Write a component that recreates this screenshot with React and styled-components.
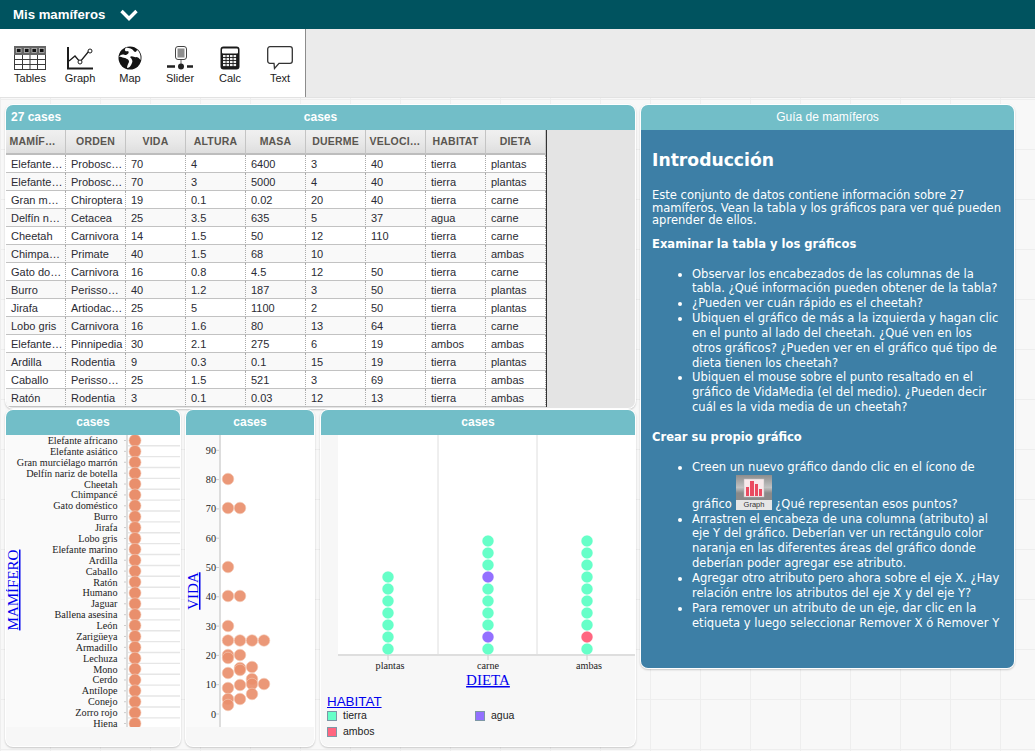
import styled, { createGlobalStyle } from "styled-components";

const GlobalStyle = createGlobalStyle`
  html, body {
    margin: 0;
    padding: 0;
    height: 100%;
    overflow: hidden;
    font-family: "Liberation Sans", Arial, sans-serif;
  }
`;

const columns = ["MAMÍFERO", "ORDEN", "VIDA", "ALTURA", "MASA", "DUERME", "VELOCIDAD", "HABITAT", "DIETA"];

const rows = [
  ["Elefante africano", "Proboscidea", "70", "4", "6400", "3", "40", "tierra", "plantas"],
  ["Elefante asiático", "Proboscidea", "70", "3", "5000", "4", "40", "tierra", "plantas"],
  ["Gran murciélago marrón", "Chiroptera", "19", "0.1", "0.02", "20", "40", "tierra", "carne"],
  ["Delfín nariz de botella", "Cetacea", "25", "3.5", "635", "5", "37", "agua", "carne"],
  ["Cheetah", "Carnivora", "14", "1.5", "50", "12", "110", "tierra", "carne"],
  ["Chimpancé", "Primate", "40", "1.5", "68", "10", "", "tierra", "ambas"],
  ["Gato doméstico", "Carnivora", "16", "0.8", "4.5", "12", "50", "tierra", "carne"],
  ["Burro", "Perissodactyla", "40", "1.2", "187", "3", "50", "tierra", "plantas"],
  ["Jirafa", "Artiodactyla", "25", "5", "1100", "2", "50", "tierra", "plantas"],
  ["Lobo gris", "Carnivora", "16", "1.6", "80", "13", "64", "tierra", "carne"],
  ["Elefante marino", "Pinnipedia", "30", "2.1", "275", "6", "19", "ambos", "ambas"],
  ["Ardilla", "Rodentia", "9", "0.3", "0.1", "15", "19", "tierra", "plantas"],
  ["Caballo", "Perissodactyla", "25", "1.5", "521", "3", "69", "tierra", "ambas"],
  ["Ratón", "Rodentia", "3", "0.1", "0.03", "12", "13", "tierra", "ambas"],
];

const mammals = [
  "Elefante africano", "Elefante asiático", "Gran murciélago marrón", "Delfín nariz de botella",
  "Cheetah", "Chimpancé", "Gato doméstico", "Burro", "Jirafa", "Lobo gris", "Elefante marino",
  "Ardilla", "Caballo", "Ratón", "Humano", "Jaguar", "Ballena asesina", "León", "Zarigüeya",
  "Armadillo", "Lechuza", "Mono", "Cerdo", "Antílope", "Conejo", "Zorro rojo", "Hiena",
];

// x, y inside the VIDA plot
const vidaDots = [
  [42, 44], [42, 73], [54, 73], [42, 132], [42, 161], [54, 161], [42, 191],
  [42, 205.5], [54, 205.5], [66, 205.5], [78, 205.5], [42, 220], [54, 220], [42, 223],
  [54, 233], [54, 235], [66, 232], [42, 238], [66, 244], [66, 249], [78, 249], [54, 250],
  [42, 253], [66, 259], [42, 264], [54, 264], [42, 270],
];

const TIERRA = "#66ffc8";
const AGUA = "#9370ff";
const AMBOS = "#ff6680";

const dietColumns = [
  { x: 50, dots: Array(7).fill(TIERRA) },
  { x: 150, dots: [TIERRA, AGUA, TIERRA, TIERRA, TIERRA, TIERRA, AGUA, TIERRA, TIERRA, TIERRA] },
  { x: 249, dots: [TIERRA, AMBOS, ...Array(8).fill(TIERRA)] },
];

const Page = styled.div`
  width: 1035px;
  height: 751px;
  display: flex;
  flex-direction: column;
  overflow: hidden;
`;

const TitleBar = styled.header`
  height: 29px;
  background: #00535f;
  display: flex;
  align-items: center;
  padding-left: 13px;
  gap: 15px;
  flex: none;
`;

const DocTitle = styled.span`
  color: #fff;
  font-size: 13.2px;
  font-weight: 700;
`;

const ToolShelf = styled.div`
  height: 69px;
  box-sizing: border-box;
  flex: none;
  background: #ebebeb;
  border-bottom: 1px solid #e2e2e2;
  display: flex;
`;

const Tools = styled.nav`
  width: 300px;
  padding-left: 5px;
  background: #fff;
  border-right: 1px solid #8c8c8c;
  display: flex;
`;

const Tool = styled.button`
  width: 50px;
  border: 0;
  padding: 17px 0 0;
  background: none;
  display: flex;
  flex-direction: column;
  align-items: center;
  gap: 2px;
  font: 11px "Liberation Sans", Arial, sans-serif;
  color: #222;
  svg {
    display: block;
  }
`;

const Canvas = styled.main`
  position: relative;
  flex: 1;
  background-color: #f8f8f8;
  background-image: linear-gradient(#eeeeee 1px, transparent 1px),
    linear-gradient(90deg, #eeeeee 1px, transparent 1px);
  background-size: 50px 50px;
  background-position: 0 1px;
`;

const Panel = styled.section`
  position: absolute;
  left: ${(p) => p.$x}px;
  top: ${(p) => p.$y - 98}px;
  width: ${(p) => p.$w}px;
  height: ${(p) => p.$h}px;
  border-radius: 7px;
  background: #f7f7f7;
  box-shadow: 0 0 0 1px #fff, 0 1px 2px 1px rgba(0, 0, 0, 0.2);
  overflow: hidden;
  display: flex;
  flex-direction: column;
`;

const PanelHead = styled.div`
  height: 25px;
  box-sizing: border-box;
  padding-bottom: 2px;
  flex: none;
  background: #72bec8;
  color: #fff;
  font-size: 12px;
  font-weight: ${(p) => (p.$light ? 400 : 700)};
  display: flex;
  align-items: center;
  justify-content: center;
  position: relative;
`;

const CaseCount = styled.span`
  position: absolute;
  left: 5px;
`;

const TableArea = styled.div`
  flex: 1;
  background: #e4e4e4;
  overflow: hidden;
`;

const TableGrid = styled.div`
  width: 540px;
  border-right: 1px solid #333;
  display: grid;
  grid-template-columns: repeat(9, 60px);
`;

const HeadCell = styled.div`
  height: 25px;
  box-sizing: border-box;
  padding: 0 3.5px 2px;
  background: linear-gradient(#f0f0f0, #e8e8e8 55%, #dedede);
  border-right: 1px solid #c4c4c4;
  border-bottom: 2px solid #bdbdbd;
  color: #5a5650;
  font-size: 10.5px;
  font-weight: 700;
  letter-spacing: 0.2px;
  line-height: 23px;
  text-align: center;
  white-space: nowrap;
  overflow: hidden;
  text-overflow: ellipsis;
`;

const Cell = styled.div`
  height: 18px;
  box-sizing: border-box;
  padding: 0 1px 0 5px;
  background: ${(p) => (p.$odd ? "#f9f9f9" : "#fff")};
  border-right: 1px dotted #aaa;
  border-bottom: 1px solid #c2c2c2;
  color: #2b2b33;
  font-size: 11px;
  line-height: 18px;
  white-space: nowrap;
  overflow: hidden;
  text-overflow: ellipsis;
`;

const PlotSvg = styled.svg`
  display: block;
  flex: none;
`;

const AxisLabel = styled.text`
  fill: #0000ee;
  font-family: "Liberation Serif", "Times New Roman", serif;
  font-size: 15px;
  text-decoration: underline;
`;

const TickText = styled.text`
  fill: #222;
  font-family: "Liberation Serif", "Times New Roman", serif;
  font-size: 10.2px;
`;

const Legend = styled.div`
  padding: 3px 6px 0;
`;

const LegendTitle = styled.a`
  color: #0000ee;
  font-size: 13.4px;
  text-decoration: underline;
  display: block;
  line-height: 15px;
`;

const LegendGrid = styled.div`
  display: grid;
  grid-template-columns: 148px 1fr;
  row-gap: 5px;
  margin-top: 1px;
`;

const LegendItem = styled.div`
  display: flex;
  align-items: center;
  gap: 5px;
  height: 11px;
  font-size: 10.5px;
  color: #222;
  line-height: 11px;
`;

const Swatch = styled.span`
  width: 8px;
  height: 8px;
  border: 1.5px solid #7d97a6;
  background: ${(p) => p.$color};
  margin-right: 1px;
`;

const Guide = styled.article`
  flex: 1;
  background: #3d7fa6;
  color: #fff;
  padding: 0 11px;
  font-family: "DejaVu Sans", Verdana, sans-serif;
  font-size: 11.55px;
  line-height: 14.85px;
  h2 {
    font-size: 17.2px;
    line-height: 24px;
    margin: 18px 0 17px;
  }
  p {
    margin: 0;
    line-height: 12.5px;
  }
  h3 {
    font-size: 11.55px;
    line-height: 15px;
    margin: 10px 0 15px;
  }
  ul {
    margin: 0 0 15px;
    padding: 0 0 0 40px;
  }
`;

const GraphChip = styled.span`
  display: inline-flex;
  vertical-align: -2px;
`;

const TablesIcon = () => (
  <svg width="32" height="24" viewBox="0 0 32 24">
    <rect x="0.5" y="0.5" width="31" height="23" fill="#fff" stroke="#3b3b3b" />
    <rect x="0" y="0" width="32" height="9" fill="#666" />
    {[2.5, 10.5, 18, 25.5].map((x) => (
      <rect key={x} x={x} y="2.5" width="4.5" height="4" fill="#111" stroke="#ccc" strokeWidth="0.7" />
    ))}
    <path d="M0 13.5H32M0 18.5H32M8.5 9V24M16 9V24M23.5 9V24" stroke="#3b3b3b" strokeWidth="1" />
  </svg>
);

const GraphIcon = () => (
  <svg width="28" height="24" viewBox="0 0 28 24" fill="none" stroke="#1c1c1c">
    <path d="M2 1V22.5H27" strokeWidth="2" />
    <path d="M3 15L9 10L14 16L23 5" strokeWidth="1.3" />
    <circle cx="14" cy="16" r="2" fill="#fff" strokeWidth="1" />
    <circle cx="24" cy="5" r="2" fill="#fff" strokeWidth="1" />
  </svg>
);

const MapIcon = () => (
  <svg width="24" height="24" viewBox="0 0 24 24">
    <circle cx="12" cy="12" r="11.5" fill="#141414" />
    <path
      d="M8 1.5C5 5 9 6 10 5C12 7 9 9 7 9C4 8 2 9 1 11C3 10 5 12 7 12C9 13 11 13 11 16C10 18 9 20 9 22C12 22 13 19 14 17C15 15 14 13 12 11C14 9 17 12 18 11C20 11 21 12 22.5 14C23 10 22 6 19 4C18 7 16 6 15 4C14 3 12 2 8 1.5Z"
      fill="#fff"
    />
    <path d="M12 1C14 3 17 5 19 4C16 2 14 1 12 1ZM4 14C6 17 7 19 6 21C3 19 2 16 2 13Z" fill="#141414" />
  </svg>
);

const SliderIcon = () => (
  <svg width="26" height="24" viewBox="0 0 26 24">
    <rect x="8.5" y="0.5" width="11" height="13" rx="2.5" fill="#fff" stroke="#444" />
    <rect x="10.5" y="2.5" width="7" height="9" fill="#8e8e8e" />
    <path d="M14 14V18" stroke="#666" />
    <path d="M0 20.5H8M20 20.5H26" stroke="#222" strokeWidth="2.4" />
    <circle cx="14" cy="20.5" r="3" fill="#222" />
  </svg>
);

const CalcIcon = () => (
  <svg width="20" height="24" viewBox="0 0 20 24">
    <rect x="0.5" y="0.5" width="19" height="23" rx="3" fill="#1a1a1a" />
    <rect x="2" y="2.5" width="16" height="5" rx="1" fill="#fff" />
    {[9, 12, 15, 18].map((y) =>
      [3, 6.5, 10, 13.5].map((x) => <rect key={`${x}-${y}`} x={x} y={y} width="2.6" height="2.1" fill="#eee" />)
    )}
  </svg>
);

const TextIcon = () => (
  <svg width="26" height="24" viewBox="0 0 26 24">
    <path
      d="M3 0.7H23C24.3 0.7 25.3 1.7 25.3 3V15C25.3 16.3 24.3 17.3 23 17.3H12L7.5 22.5L7 17.3H3C1.7 17.3 0.7 16.3 0.7 15V3C0.7 1.7 1.7 0.7 3 0.7Z"
      fill="#fff"
      stroke="#333"
      strokeWidth="1.3"
    />
  </svg>
);

const GraphTile = () => (
  <GraphChip>
    <svg width="36" height="35" viewBox="0 0 36 35">
      <defs>
        <linearGradient id="tile" x1="0" y1="0" x2="0" y2="1">
          <stop offset="0" stopColor="#8d8d8d" />
          <stop offset="0.5" stopColor="#c2c2c2" />
          <stop offset="0.72" stopColor="#8a8a8a" />
        </linearGradient>
      </defs>
      <rect width="36" height="25" fill="url(#tile)" />
      <rect y="25" width="36" height="10" fill="#e6e6e6" />
      <rect x="8" y="4" width="20" height="18" fill="#f7e9eb" stroke="#bbb" strokeWidth="0.5" />
      <path d="M10 21V12H13V21ZM14 21V6H18V21ZM19 21V9H22V21ZM23 21V14H26V21Z" fill="#ea4a60" />
      <text x="18" y="32" textAnchor="middle" fontSize="7.5" fontFamily="Liberation Sans, Arial, sans-serif" fill="#333">
        Graph
      </text>
    </svg>
  </GraphChip>
);

const MammalPlot = () => {
  const step = 10.885;
  return (
    <PlotSvg width="174" height="292" viewBox="0 0 174 292">
      <rect width="174" height="292" fill="#fafafa" />
      <rect x="121" width="53" height="292" fill="#fff" />
      {mammals.map((name, i) => {
        const y = 5.5 + i * step;
        return (
          <g key={name}>
            <TickText x="111.5" y={y + 3.5} textAnchor="end">
              {name}
            </TickText>
            <path d={`M118 ${y}H122`} stroke="#ccc" />
            <path d={`M122 ${y + 5.2}H174`} stroke="#e6e6e6" strokeWidth="1.4" />
          </g>
        );
      })}
      <path d="M121 0V292" stroke="#ddd" strokeWidth="2" />
      {mammals.map((name, i) => (
        <circle key={name} cx="129" cy={5.5 + i * step} r="6" fill="#e98f6c" stroke="#f4c7b4" strokeWidth="0.6" />
      ))}
      <AxisLabel x="0" y="0" textAnchor="middle" transform="translate(12 155) rotate(-90)">
        MAMÍFERO
      </AxisLabel>
    </PlotSvg>
  );
};

const VidaPlot = () => (
  <PlotSvg width="128" height="292" viewBox="0 0 128 292">
    <rect width="128" height="292" fill="#fafafa" />
    <rect x="34" width="94" height="292" fill="#fff" />
    {[0, 10, 20, 30, 40, 50, 60, 70, 80, 90].map((v) => {
      const y = 279 - v * 2.93;
      return (
        <g key={v}>
          <TickText x="30" y={y + 3.5} textAnchor="end">
            {v}
          </TickText>
          <path d={`M30 ${y}H33`} stroke="#ccc" />
        </g>
      );
    })}
    <path d="M34 0V294" stroke="#ddd" strokeWidth="2" />
    {vidaDots.map(([x, y], i) => (
      <circle key={i} cx={x} cy={y} r="5.8" fill="#e98f6c" stroke="#f4c7b4" strokeWidth="0.6" fillOpacity="0.92" />
    ))}
    <AxisLabel x="0" y="0" textAnchor="middle" transform="translate(12 156) rotate(-90)">
      VIDA
    </AxisLabel>
  </PlotSvg>
);

const DietaPlot = () => (
  <PlotSvg width="314" height="256" viewBox="0 0 314 256">
    <rect x="17" width="297" height="220" fill="#fff" />
    <path d="M117 0V220M216 0V220" stroke="#dedede" />
    <path d="M17 220H314" stroke="#dedede" strokeWidth="2" />
    {dietColumns.map((col) => (
      <path key={col.x} d={`M${col.x + 17} 220V225`} stroke="#ccc" />
    ))}
    {dietColumns.map((col) =>
      col.dots.map((color, i) => (
        <circle key={`${col.x}-${i}`} cx={col.x + 17} cy={214 - i * 12} r="5.8" fill={color} stroke="#fff" strokeOpacity="0.4" strokeWidth="0.5" />
      ))
    )}
    <TickText x="69" y="233.5" textAnchor="middle">plantas</TickText>
    <TickText x="167" y="233.5" textAnchor="middle">carne</TickText>
    <TickText x="268" y="233.5" textAnchor="middle">ambas</TickText>
    <AxisLabel x="167" y="250" textAnchor="middle">
      DIETA
    </AxisLabel>
  </PlotSvg>
);

const Chevron = () => (
  <svg width="18" height="12" viewBox="0 0 18 12" fill="none">
    <path d="M1.5 2L9 9.5L16.5 2" stroke="#fff" strokeWidth="3.4" />
  </svg>
);

const tools = [
  { name: "Tables", Icon: TablesIcon },
  { name: "Graph", Icon: GraphIcon },
  { name: "Map", Icon: MapIcon },
  { name: "Slider", Icon: SliderIcon },
  { name: "Calc", Icon: CalcIcon },
  { name: "Text", Icon: TextIcon },
];

const App = () => (
  <Page>
    <GlobalStyle />
    <TitleBar>
      <DocTitle>Mis mamíferos</DocTitle>
      <Chevron />
    </TitleBar>
    <ToolShelf>
      <Tools>
        {tools.map(({ name, Icon }) => (
          <Tool key={name}>
            <Icon />
            {name}
          </Tool>
        ))}
      </Tools>
    </ToolShelf>
    <Canvas>
      <Panel $x={6} $y={105} $w={629} $h={303}>
        <PanelHead>
          <CaseCount>27 cases</CaseCount>
          cases
        </PanelHead>
        <TableArea>
          <TableGrid>
            {columns.map((c) => (
              <HeadCell key={c}>{c}</HeadCell>
            ))}
            {rows.map((row, r) =>
              row.map((v, c) => (
                <Cell key={`${r}-${c}`} $odd={r % 2 === 1}>
                  {v}
                </Cell>
              ))
            )}
          </TableGrid>
        </TableArea>
      </Panel>

      <Panel $x={6} $y={410} $w={174} $h={336}>
        <PanelHead>cases</PanelHead>
        <MammalPlot />
      </Panel>

      <Panel $x={186} $y={410} $w={128} $h={336}>
        <PanelHead>cases</PanelHead>
        <VidaPlot />
      </Panel>

      <Panel $x={321} $y={410} $w={314} $h={336}>
        <PanelHead>cases</PanelHead>
        <DietaPlot />
        <Legend>
          <LegendTitle>HABITAT</LegendTitle>
          <LegendGrid>
            <LegendItem>
              <Swatch $color={TIERRA} />
              tierra
            </LegendItem>
            <LegendItem>
              <Swatch $color={AGUA} />
              agua
            </LegendItem>
            <LegendItem>
              <Swatch $color={AMBOS} />
              ambos
            </LegendItem>
          </LegendGrid>
        </Legend>
      </Panel>

      <Panel $x={641} $y={105} $w={373} $h={563}>
        <PanelHead $light>Guía de mamíferos</PanelHead>
        <Guide>
          <h2>Introducción</h2>
          <p>
            Este conjunto de datos contiene información sobre 27 mamíferos. Vean la tabla y los gráficos para ver qué
            pueden aprender de ellos.
          </p>
          <h3>Examinar la tabla y los gráficos</h3>
          <ul>
            <li>
              Observar los encabezados de las columnas de la tabla. ¿Qué información pueden obtener de la tabla?
            </li>
            <li>¿Pueden ver cuán rápido es el cheetah?</li>
            <li>
              Ubiquen el gráfico de más a la izquierda y hagan clic en el punto al lado del cheetah. ¿Qué ven en los
              otros gráficos? ¿Pueden ver en el gráfico qué tipo de dieta tienen los cheetah?
            </li>
            <li>
              Ubiquen el mouse sobre el punto resaltado en el gráfico de VidaMedia (el del medio). ¿Pueden decir cuál
              es la vida media de un cheetah?
            </li>
          </ul>
          <h3>Crear su propio gráfico</h3>
          <ul>
            <li>
              Creen un nuevo gráfico dando clic en el ícono de gráfico <GraphTile /> ¿Qué representan esos puntos?
            </li>
            <li>
              Arrastren el encabeza de una columna (atributo) al eje Y del gráfico. Deberían ver un rectángulo color
              naranja en las diferentes áreas del gráfico donde deberían poder agregar ese atributo.
            </li>
            <li>
              Agregar otro atributo pero ahora sobre el eje X. ¿Hay relación entre los atributos del eje X y del eje Y?
            </li>
            <li>
              Para remover un atributo de un eje, dar clic en la etiqueta y luego seleccionar Remover X ó Remover Y
            </li>
          </ul>
        </Guide>
      </Panel>
    </Canvas>
  </Page>
);

export default App;
